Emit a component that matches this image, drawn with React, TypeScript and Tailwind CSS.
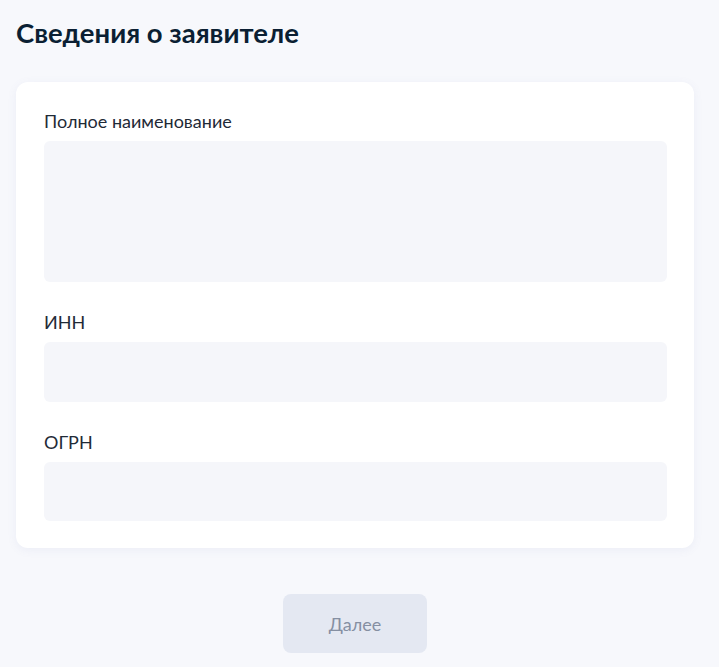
export default function App() {
  const fields = [
    { label: 'Полное наименование', h: 'h-[141px]' },
    { label: 'ИНН', h: 'h-[60px]' },
    { label: 'ОГРН', h: 'h-[59px]' },
  ]

  return (
    <div className="min-h-[667px] bg-[#f7f8fc] px-4 pt-[17px] font-['Lato','Noto_Sans',sans-serif]">
      <h1 className="text-[27.5px] leading-8 font-bold text-[#0b1f33]">Сведения о заявителе</h1>

      <section className="mt-[33px] w-[678px] rounded-xl bg-white pl-7 pr-[27px] pt-[27px] pb-[27px] shadow-[0_2px_10px_rgba(100,120,180,0.08)] flex flex-col gap-7">
        {fields.map(f => (
          <div key={f.label}>
            <p className="text-lg leading-6 text-[#1f2a37]">{f.label}</p>
            <div className={`mt-2 rounded-md bg-[#f5f6fa] ${f.h}`} />
          </div>
        ))}
      </section>

      <div className="w-[678px] flex justify-center mt-[46px]">
        <button className="w-36 h-[59px] rounded-lg bg-[#e4e8f2] text-lg text-[#858fa2]">Далее</button>
      </div>
    </div>
  )
}
